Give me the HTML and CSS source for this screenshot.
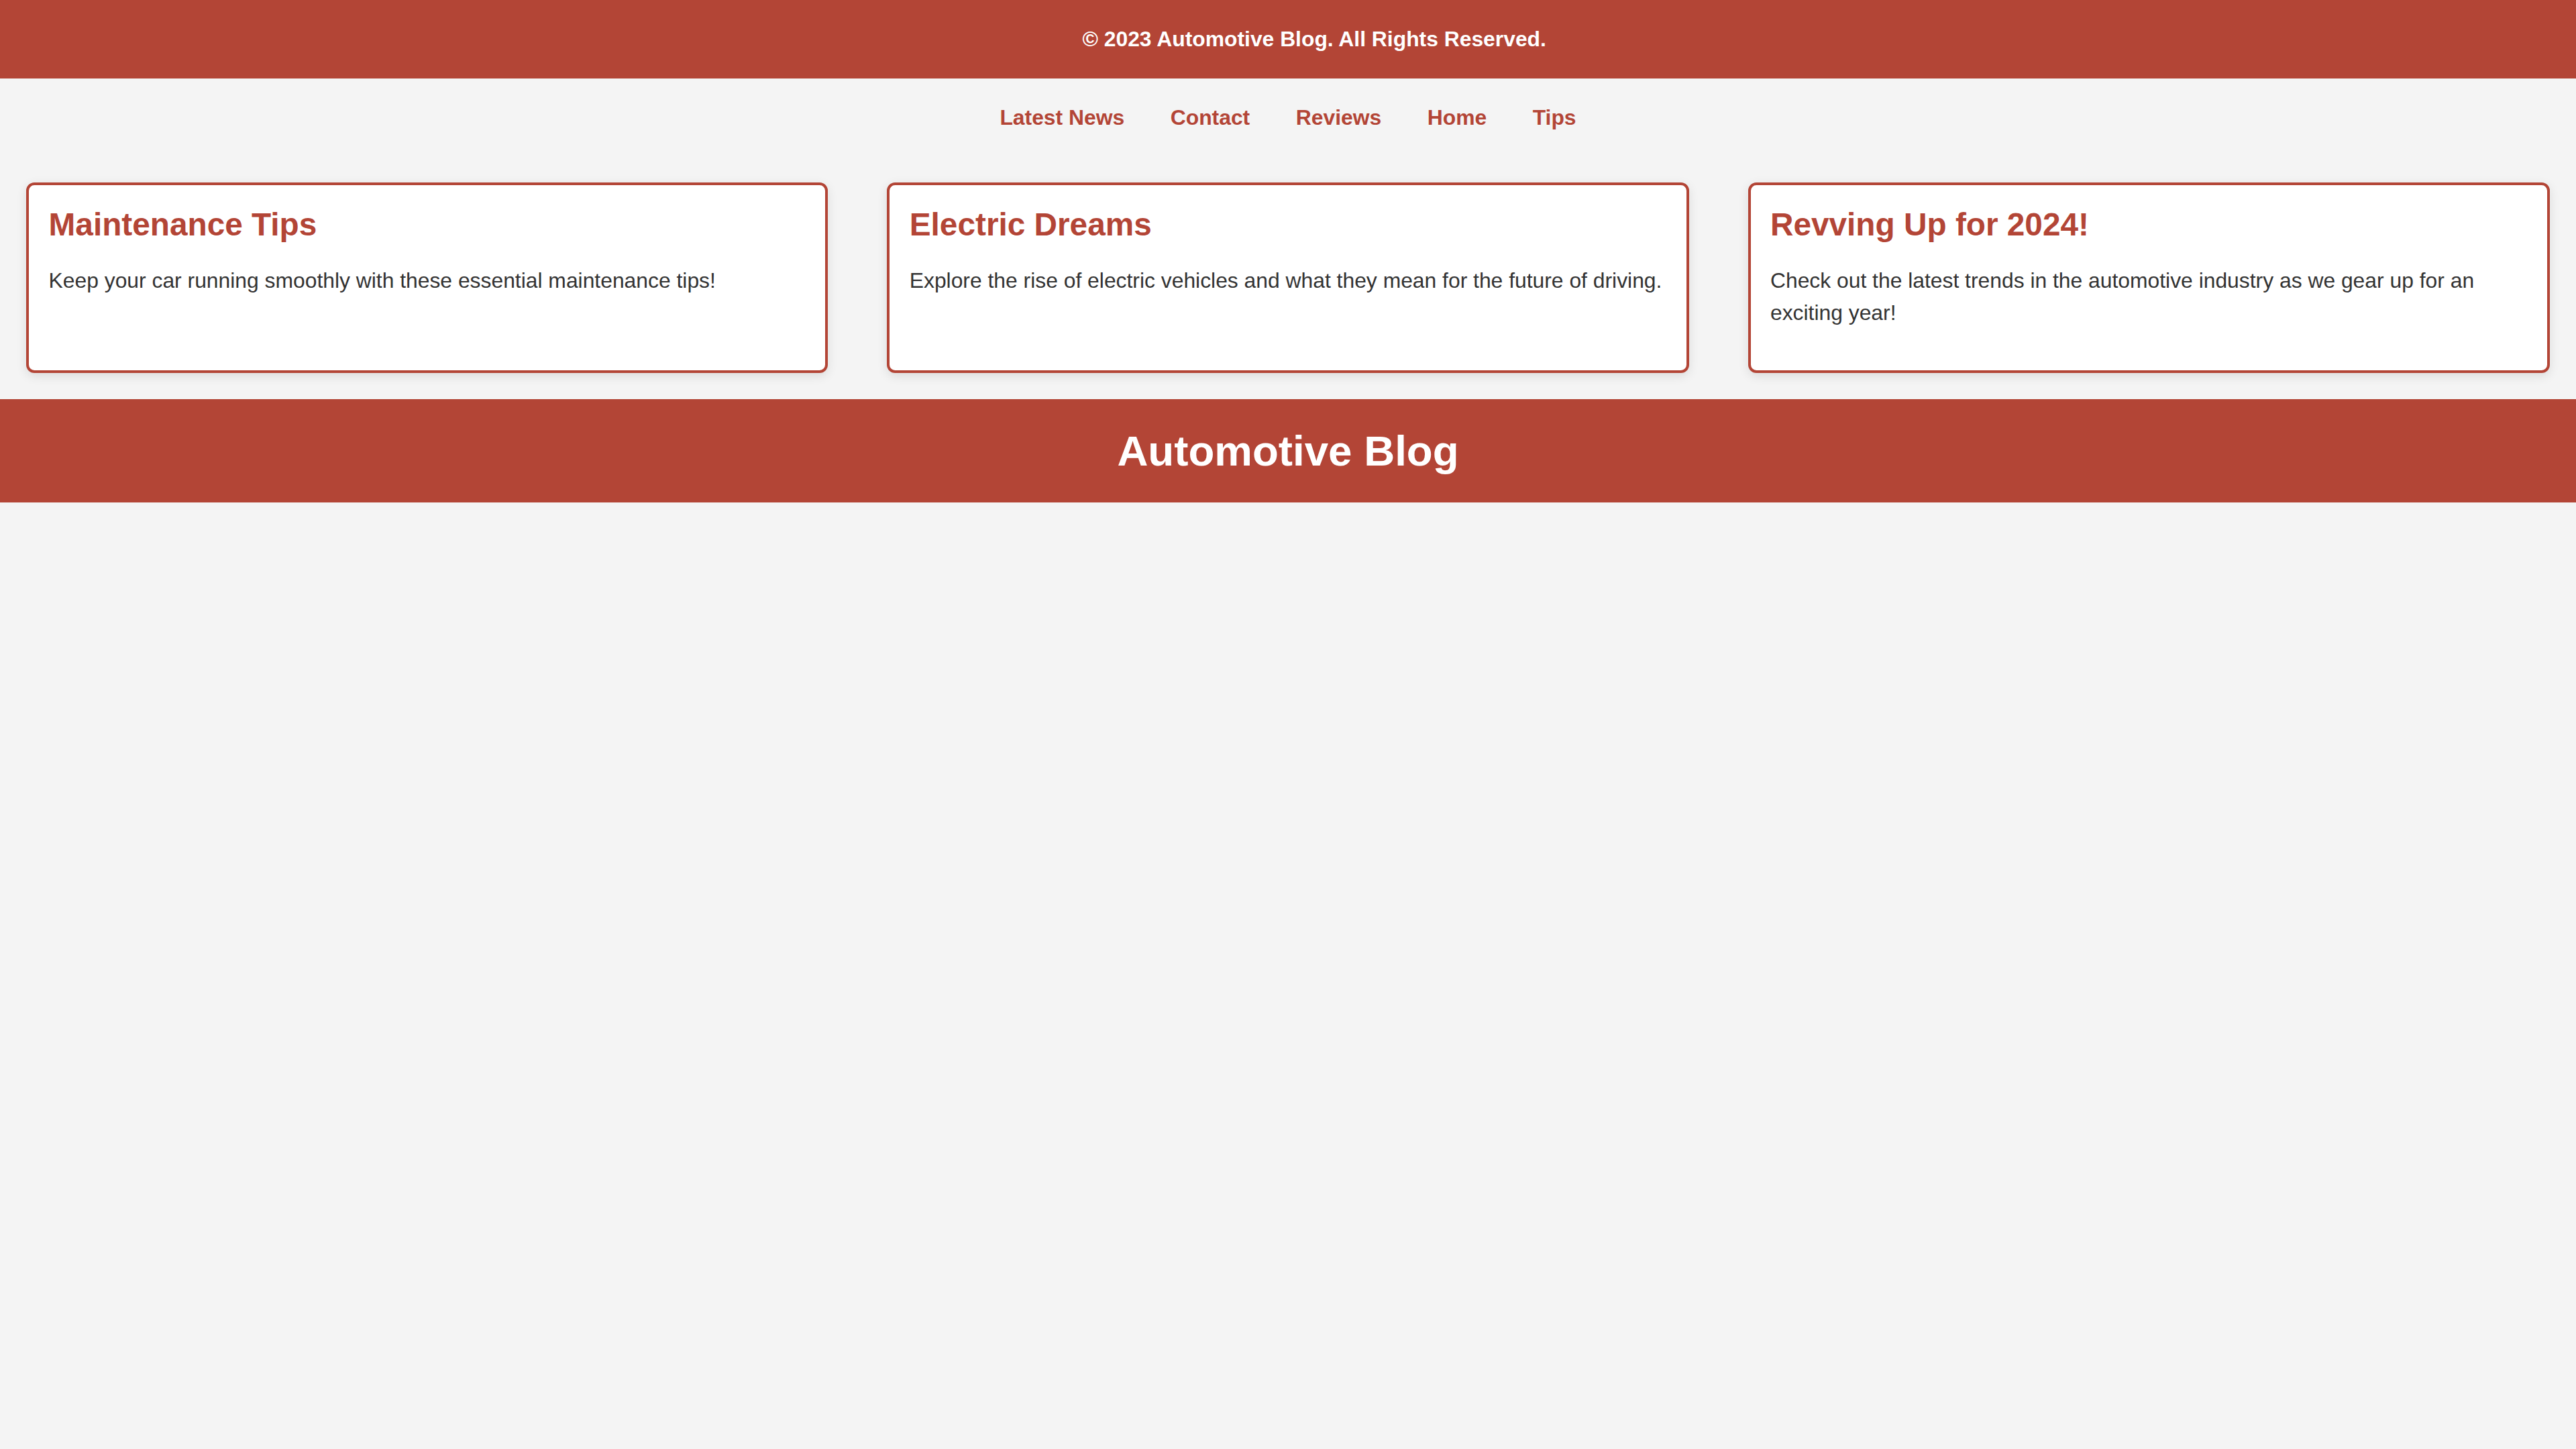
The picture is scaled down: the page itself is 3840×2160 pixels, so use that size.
FILE: index.html
```html
<!DOCTYPE html>
<html lang="en">
<head>
<meta charset="utf-8">
<title>Automotive Blog</title>
<link rel="stylesheet" href="styles.css">
</head>
<body>
  <footer class="site-footer">
    <p class="copyright">&copy; 2023 Automotive Blog. All Rights Reserved.</p>
  </footer>
  <nav class="site-nav">
    <a class="nav-link" href="#">Latest News</a>
    <a class="nav-link" href="#">Contact</a>
    <a class="nav-link" href="#">Reviews</a>
    <a class="nav-link" href="#">Home</a>
    <a class="nav-link" href="#">Tips</a>
  </nav>
  <main class="posts">
    <article class="post-card">
      <h2 class="post-title">Maintenance Tips</h2>
      <p class="post-text">Keep your car running smoothly with these essential maintenance tips!</p>
    </article>
    <article class="post-card">
      <h2 class="post-title">Electric Dreams</h2>
      <p class="post-text">Explore the rise of electric vehicles and what they mean for the future of driving.</p>
    </article>
    <article class="post-card">
      <h2 class="post-title">Revving Up for 2024!</h2>
      <p class="post-text">Check out the latest trends in the automotive industry as we gear up for an exciting year!</p>
    </article>
  </main>
  <header class="site-header">
    <h1 class="site-title">Automotive Blog</h1>
  </header>
</body>
</html>
```

FILE: styles.css
```css
html {
  zoom: 2.449;
}

body {
  margin: 0;
  background: #f4f4f4;
  font-family: "Liberation Sans", Arial, Helvetica, sans-serif;
  font-size: 13px;
  line-height: 1.2;
  color: #333333;
}

.site-footer {
  background: #b34536;
  color: #ffffff;
  text-align: center;
  padding: 16px 0 16px 32px;
}

.copyright {
  margin: 0;
  font-weight: bold;
}

.site-nav {
  display: flex;
  justify-content: center;
  padding: 16px;
}

.nav-link {
  margin: 0 14px;
  color: #b34536;
  font-weight: bold;
  text-decoration: none;
}

.posts {
  display: flex;
  justify-content: space-between;
  align-items: stretch;
  padding: 16px;
}

.post-card {
  width: 30%;
  padding: 12px;
  background: #ffffff;
  border: 2px solid #b34536;
  border-radius: 5px;
  box-shadow: 0 2px 6px rgba(0, 0, 0, 0.1);
}

.post-title {
  margin: 0 0 10px;
  font-size: 1.5em;
  color: #b34536;
}

.post-text {
  margin: 13px 0;
  line-height: 1.5;
}

.site-header {
  background: #b34536;
  color: #ffffff;
  text-align: center;
  padding: 16px;
}

.site-title {
  margin: 0;
  font-size: 2em;
}
```
